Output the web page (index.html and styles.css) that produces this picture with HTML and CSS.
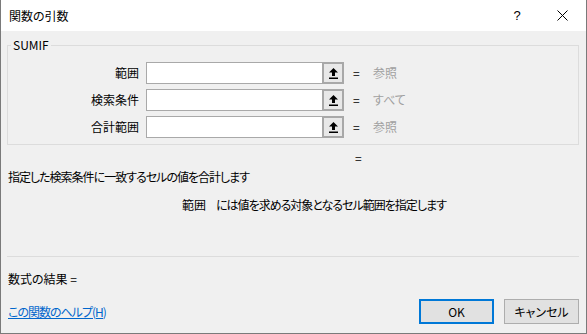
FILE: index.html
```html
<!DOCTYPE html>
<html lang="ja">
<head>
<meta charset="utf-8">
<link rel="stylesheet" href="styles.css">
</head>
<body>
<div class="window">
  <div class="titlebar">
    <span class="title">関数の引数</span>
    <div class="controls">
      <span class="help">?</span>
      <span class="close"><svg width="11" height="11" viewBox="0 0 11 11"><path d="M0.5 0.5 L10.5 10.5 M10.5 0.5 L0.5 10.5" stroke="#000" stroke-width="1" fill="none"/></svg></span>
    </div>
  </div>
  <div class="content">
    <div class="group">
      <div class="legend">SUMIF</div>
      <div class="args">
        <div class="arg">
          <span class="label">範囲</span>
          <div class="field"><div class="box"></div><div class="ref"><svg width="9" height="11" viewBox="0 0 9 11"><path d="M4.5 0 L9 4.5 L6 4.5 L6 8 L3 8 L3 4.5 L0 4.5 Z" fill="#000"/><rect x="0" y="9.5" width="9" height="1.5" fill="#000"/></svg></div></div>
          <span class="eq">=</span>
          <span class="val">参照</span>
        </div>
        <div class="arg">
          <span class="label">検索条件</span>
          <div class="field"><div class="box"></div><div class="ref"><svg width="9" height="11" viewBox="0 0 9 11"><path d="M4.5 0 L9 4.5 L6 4.5 L6 8 L3 8 L3 4.5 L0 4.5 Z" fill="#000"/><rect x="0" y="9.5" width="9" height="1.5" fill="#000"/></svg></div></div>
          <span class="eq">=</span>
          <span class="val">すべて</span>
        </div>
        <div class="arg">
          <span class="label">合計範囲</span>
          <div class="field"><div class="box"></div><div class="ref"><svg width="9" height="11" viewBox="0 0 9 11"><path d="M4.5 0 L9 4.5 L6 4.5 L6 8 L3 8 L3 4.5 L0 4.5 Z" fill="#000"/><rect x="0" y="9.5" width="9" height="1.5" fill="#000"/></svg></div></div>
          <span class="eq">=</span>
          <span class="val">参照</span>
        </div>
      </div>
    </div>
    <div class="fneq">=</div>
    <p class="desc">指定した検索条件に一致するセルの値を合計します</p>
    <p class="argdesc"><span class="argname">範囲</span>には値を求める対象となるセル範囲を指定します</p>
    <div class="sep"></div>
    <div class="result">数式の結果 =</div>
    <div class="footer">
      <a class="helplink" href="#">この関数のヘルプ(H)</a>
      <div class="buttons">
        <button class="btn primary">OK</button>
        <button class="btn">キャンセル</button>
      </div>
    </div>
  </div>
</div>
</body>
</html>
```

FILE: styles.css
```css
* { box-sizing: border-box; }
html, body { margin: 0; padding: 0; }
body {
  width: 587px;
  height: 334px;
  overflow: hidden;
  font-family: "Noto Sans CJK JP", "Noto Sans", sans-serif;
  font-size: 12px;
  font-feature-settings: "palt";
  color: #000;
  background: #f0f0f0;
}
.window {
  width: 587px;
  height: 334px;
  border: 1px solid #7a7a7a;
  border-top: none;
  background: #f0f0f0;
  display: flex;
  flex-direction: column;
}
.titlebar {
  height: 31px;
  flex: none;
  background: #fff;
  display: flex;
  align-items: center;
  justify-content: space-between;
  padding: 0 0 0 8px;
}
.title { line-height: 14px; }
.controls {
  display: flex;
  align-items: center;
  height: 31px;
}
.help {
  width: 20px;
  text-align: center;
  font-family: "Liberation Sans", sans-serif;
  font-size: 13px;
  margin-right: 30px;
}
.close {
  display: flex;
  width: 11px;
  height: 11px;
  margin-right: 18px;
}
.content {
  flex: 1;
  padding: 0 7px 9px 6px;
  display: flex;
  flex-direction: column;
}
.group {
  margin-top: 14px;
  border: 1px solid #dcdcdc;
  padding: 0 0 6px 0;
}
.legend {
  width: fit-content;
  margin: -8px 0 0 3px;
  padding: 0 2px;
  background: #f0f0f0;
  line-height: 14px;
  height: 14px;
}
.args {
  margin-top: 10px;
  display: flex;
  flex-direction: column;
  gap: 5px;
}
.arg {
  display: flex;
  align-items: center;
  height: 22px;
}
.label {
  width: 131px;
  text-align: right;
  line-height: 14px;
}
.field {
  margin-left: 7px;
  width: 198px;
  height: 22px;
  display: flex;
}
.box {
  flex: 1;
  background: #fff;
  border: 1px solid #a9a9a9;
  border-right: none;
}
.ref {
  width: 22px;
  height: 22px;
  border: 2px solid #a8a8a8;
  background: #e8e8e8;
  display: flex;
  align-items: center;
  justify-content: center;
}
.eq {
  margin-left: 9px;
  width: 20px;
  line-height: 14px;
}
.val {
  color: #a0a0a0;
  line-height: 14px;
}
.fneq {
  margin-top: 6px;
  height: 14px;
  line-height: 14px;
  padding-left: 348px;
}
.desc {
  margin: 5px 0 0 1px;
  line-height: 14px;
  height: 14px;
  letter-spacing: -1px;
}
.argdesc {
  margin: 14px 0 0 175px;
  line-height: 14px;
  height: 14px;
  letter-spacing: -1px;
}
.argname { margin-right: 10px; letter-spacing: 0; }
.sep {
  margin-top: 44px;
  height: 1px;
  background: #dcdcdc;
}
.result {
  margin: 15px 0 0 1px;
  line-height: 14px;
  height: 14px;
}
.footer {
  margin-top: 13px;
  height: 25px;
  display: flex;
  align-items: center;
  justify-content: space-between;
}
.helplink {
  color: #0066cc;
  text-decoration: underline;
  line-height: 14px;
  margin-left: 1px;
  letter-spacing: -1px;
}
.buttons {
  display: flex;
  gap: 10px;
}
.btn {
  width: 75px;
  height: 25px;
  background: #e1e1e1;
  border: 1px solid #adadad;
  font-family: inherit;
  font-size: 12px;
  font-feature-settings: "palt";
  color: #000;
  padding: 0;
  line-height: 14px;
}
.btn.primary {
  border: 2px solid #0078d7;
}
```
